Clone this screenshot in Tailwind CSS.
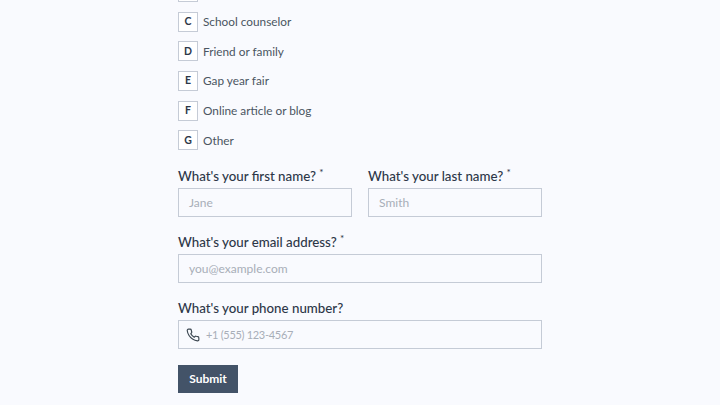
<!doctype html>
<html lang="en">
  <head>
    <meta charset="UTF-8" />
    <title>Form</title>
    <script src="https://cdn.jsdelivr.net/npm/@tailwindcss/browser@4"></script>
  </head>
  <body class="bg-[#f9fafe] h-[405px] overflow-hidden font-['Lato',sans-serif]">
    <form class="w-[364px] ml-[178px] -mt-[18px] flex flex-col text-[#4a5561]">
      <!-- options -->
      <div class="flex flex-col gap-[9.7px] text-[11.8px]">
        <div class="flex items-center gap-[5px]"><span class="w-5 h-5 bg-white border border-[#c5cbd6]"></span></div>
        <div class="flex items-center gap-[5px]"><span class="w-5 h-5 flex items-center justify-center bg-white border border-[#c5cbd6] text-[10.5px] font-bold text-[#2d3748]">C</span><span>School counselor</span></div>
        <div class="flex items-center gap-[5px]"><span class="w-5 h-5 flex items-center justify-center bg-white border border-[#c5cbd6] text-[10.5px] font-bold text-[#2d3748]">D</span><span>Friend or family</span></div>
        <div class="flex items-center gap-[5px]"><span class="w-5 h-5 flex items-center justify-center bg-white border border-[#c5cbd6] text-[10.5px] font-bold text-[#2d3748]">E</span><span>Gap year fair</span></div>
        <div class="flex items-center gap-[5px]"><span class="w-5 h-5 flex items-center justify-center bg-white border border-[#c5cbd6] text-[10.5px] font-bold text-[#2d3748]">F</span><span>Online article or blog</span></div>
        <div class="flex items-center gap-[5px]"><span class="w-5 h-5 flex items-center justify-center bg-white border border-[#c5cbd6] text-[10.5px] font-bold text-[#2d3748]">G</span><span>Other</span></div>
      </div>
      <!-- names -->
      <div class="flex gap-4 mt-[16px]">
        <div class="flex-1">
          <label class="block h-[21px] text-[13.3px] leading-[21px] font-medium text-[#2d3748]">What's your first name? <sup class="text-[10px]">*</sup></label>
          <div class="mt-[1px] h-[29px] flex items-center px-[10px] border border-[#c5cbd6] bg-[#f9fafe] text-[12px] text-[#a8aeb8]">Jane</div>
        </div>
        <div class="flex-1">
          <label class="block h-[21px] text-[13.3px] leading-[21px] font-medium text-[#2d3748]">What's your last name? <sup class="text-[10px]">*</sup></label>
          <div class="mt-[1px] h-[29px] flex items-center px-[10px] border border-[#c5cbd6] bg-[#f9fafe] text-[12px] text-[#a8aeb8]">Smith</div>
        </div>
      </div>
      <!-- email -->
      <div class="mt-[15px]">
        <label class="block h-[21px] text-[13.3px] leading-[21px] font-medium text-[#2d3748]">What's your email address? <sup class="text-[10px]">*</sup></label>
        <div class="mt-[1px] h-[29px] flex items-center px-[10px] border border-[#c5cbd6] bg-[#f9fafe] text-[12px] text-[#a8aeb8]">you@example.com</div>
      </div>
      <!-- phone -->
      <div class="mt-[15px]">
        <label class="block h-[21px] text-[13.3px] leading-[21px] font-medium text-[#2d3748]">What's your phone number?</label>
        <div class="mt-[1px] h-[29px] flex items-center pl-[7px] gap-[6px] border border-[#c5cbd6] bg-[#f9fafe] text-[11px] tracking-[-0.3px] text-[#a8aeb8]">
          <svg class="w-[14px] h-[14px] text-[#3d4852]" viewBox="0 0 24 24" fill="none" stroke="currentColor" stroke-width="2" stroke-linecap="round" stroke-linejoin="round"><path d="M22 17v3a2 2 0 0 1-2.2 2 19.8 19.8 0 0 1-8.6-3.1 19.5 19.5 0 0 1-6-6A19.8 19.8 0 0 1 2.1 4.2 2 2 0 0 1 4.1 2h3a2 2 0 0 1 2 1.7c.1 1 .4 1.9.7 2.8a2 2 0 0 1-.5 2.1L8.1 9.9a16 16 0 0 0 6 6l1.3-1.3a2 2 0 0 1 2.1-.4c.9.3 1.8.6 2.8.7A2 2 0 0 1 22 17z"/></svg>
          <span>+1 (555) 123-4567</span>
        </div>
      </div>
      <button type="button" class="mt-4 w-[60px] h-[28px] bg-[#435368] text-white text-[12px] font-bold">Submit</button>
    </form>
  </body>
</html>
